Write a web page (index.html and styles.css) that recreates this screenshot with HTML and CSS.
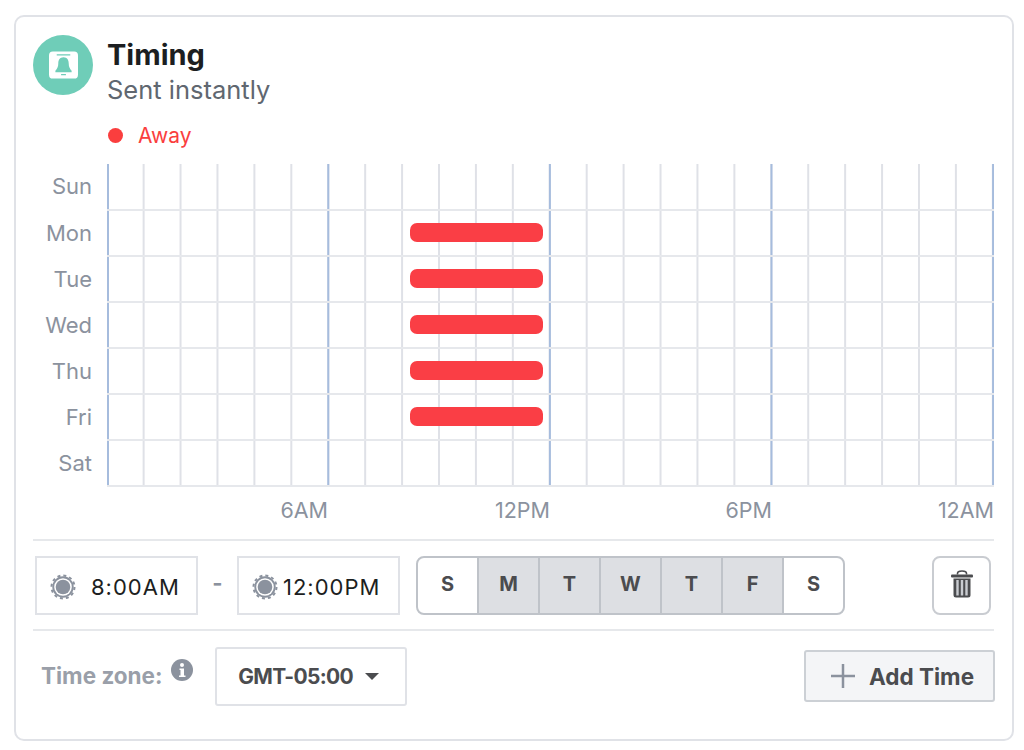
FILE: index.html
```html
<!DOCTYPE html>
<html lang="en">
<head>
<meta charset="utf-8">
<title>Timing</title>
<link rel="stylesheet" href="styles.css">
</head>
<body>
<section class="card">
  <header class="head">
    <div class="badge">
      <svg width="29" height="28" viewBox="0 0 30 28"><rect width="30" height="28" rx="4" fill="#fff"/><path d="M8 3.500h14M12.500 24h5" stroke="#6fcdb8" stroke-width="1.300"/><path d="M15 6c-3.800 0-5.400 3-5.400 6.500 0 3.500-1.100 5.200-3 7.500v1.500h16.800V20c-1.900-2.300-3-4-3-7.500C20.400 9 18.800 6 15 6z" fill="#6fcdb8"/></svg>
    </div>
    <div>
      <h1 class="title">Timing</h1>
      <p class="sub">Sent instantly</p>
    </div>
  </header>
  <div class="legend"><span class="dot"></span>Away</div>

  <div class="chart">
    <div class="row"><span class="day">Sun</span><div class="track"></div></div>
    <div class="row"><span class="day">Mon</span><div class="track"><span class="bar"></span></div></div>
    <div class="row"><span class="day">Tue</span><div class="track"><span class="bar"></span></div></div>
    <div class="row"><span class="day">Wed</span><div class="track"><span class="bar"></span></div></div>
    <div class="row"><span class="day">Thu</span><div class="track"><span class="bar"></span></div></div>
    <div class="row"><span class="day">Fri</span><div class="track"><span class="bar"></span></div></div>
    <div class="row"><span class="day">Sat</span><div class="track"></div></div>
    <div class="axis"><span>6AM</span><span>12PM</span><span>6PM</span><span>12AM</span></div>
  </div>

  <div class="controls">
    <div class="time">
      <svg class="sun" width="26" height="26" viewBox="0 0 26 26"><circle cx="13" cy="13" r="11.500" fill="none" stroke="#8b929e" stroke-width="2" stroke-dasharray="3 3.021"/><circle cx="13" cy="13" r="10.700" fill="#8b929e"/><circle cx="13" cy="13" r="8.800" fill="#fff"/><circle cx="13" cy="13" r="7.300" fill="#8b929e"/></svg>
      <span class="clock wide">8:00AM</span>
    </div>
    <span class="dash">-</span>
    <div class="time">
      <svg class="sun" width="26" height="26" viewBox="0 0 26 26"><circle cx="13" cy="13" r="11.500" fill="none" stroke="#8b929e" stroke-width="2" stroke-dasharray="3 3.021"/><circle cx="13" cy="13" r="10.700" fill="#8b929e"/><circle cx="13" cy="13" r="8.800" fill="#fff"/><circle cx="13" cy="13" r="7.300" fill="#8b929e"/></svg>
      <span class="clock">12:00PM</span>
    </div>
    <div class="week">
      <span class="wd">S</span><span class="wd on">M</span><span class="wd on">T</span><span class="wd on">W</span><span class="wd on">T</span><span class="wd on">F</span><span class="wd">S</span>
    </div>
    <button class="trash" type="button" aria-label="Delete">
      <svg width="22" height="28" viewBox="0 0 22 28"><path d="M6.500 4.500V3.500C6.500 1.800 8 1 11 1s4.500.8 4.500 2.500v1" fill="none" stroke="#4b4c4f" stroke-width="1.600"/><rect y="4.500" width="22" height="3" rx="1" fill="#4b4c4f"/><path d="M2.500 8.500h17V25a2.500 2.500 0 0 1-2.500 2.500H5A2.500 2.500 0 0 1 2.500 25z" fill="#4b4c4f"/><path d="M6.500 10v15.500M11 10v15.500M15.500 10v15.500" stroke="#c9ccd1" stroke-width="2.400"/></svg>
    </button>
  </div>

  <div class="footer">
    <span class="tz-label">Time zone:</span>
    <svg class="info" width="22" height="22" viewBox="0 0 22 22"><circle cx="11" cy="11" r="11" fill="#8b929e"/><circle cx="11" cy="6" r="2" fill="#fff"/><path d="M8.500 9.500H13v7h1.500v1.500h-6.500v-1.500H9.500v-5.500H8.500z" fill="#fff"/></svg>
    <button class="select" type="button">GMT-05:00<span class="caret"></span></button>
    <button class="add" type="button">
      <svg width="26" height="26" viewBox="0 0 26 26"><path d="M13 1v24M1 13h24" stroke="#8b929e" stroke-width="2.500"/></svg>
      Add Time
    </button>
  </div>
</section>
</body>
</html>
```
FILE: styles.css
```css
* { box-sizing: border-box; }
html, body { margin: 0; background: #fff; }
body {
  width: 1024px;
  height: 750px;
  padding: 15px 10px 9px 14px;
  font-family: "Inter", "Liberation Sans", sans-serif;
  overflow: hidden;
}
.card {
  height: 726px;
  border: 2px solid #e0e2e7;
  border-radius: 10px;
  padding: 18px 18px 0 17px;
}
.head { display: flex; gap: 14px; }
.badge {
  width: 60px;
  height: 60px;
  border-radius: 50%;
  background: #6fcdb8;
  display: flex;
  align-items: center;
  justify-content: center;
}
.title {
  margin: 2px 0 0;
  font-size: 29px;
  line-height: 36px;
  font-weight: 700;
  color: #1c1e21;
}
.sub {
  margin: 0;
  font-size: 25.500px;
  line-height: 34px;
  color: #606770;
}
.legend {
  display: flex;
  align-items: center;
  margin: 13px 0 0 75px;
  height: 30px;
  font-size: 21px;
  color: #fa3e3e;
}
.dot {
  width: 15px;
  height: 15px;
  border-radius: 50%;
  background: #fa3e3e;
  margin-right: 15px;
}
.chart { margin-top: 14px; }
.row { display: flex; height: 46px; }
.row:first-child { height: 47px; }
.day {
  width: 59px;
  margin-right: 15px;
  text-align: right;
  font-size: 22px;
  line-height: 44px;
  color: #8b929e;
}
.track {
  width: 887px;
  padding: 12px 0 0 303px;
  border-bottom: 2px solid #e6e8ec;
  background-image:
    linear-gradient(#a6bcdd, #a6bcdd),
    linear-gradient(90deg, #a6bcdd 2px, transparent 2px),
    linear-gradient(90deg, #dfe1e7 2px, transparent 2px);
  background-size: 2px 100%, 221.600px 100%, 36.930px 100%;
  background-position: 0 0, -1.300px 0, -1.300px 0;
  background-repeat: no-repeat, repeat-x, repeat-x;
}
.bar {
  display: block;
  width: 133px;
  height: 19px;
  border-radius: 7px;
  background: #fa3e45;
}
.axis {
  display: grid;
  grid-template-columns: 295px repeat(3, 222px);
  margin-top: 9px;
  height: 33px;
  font-size: 21.500px;
  line-height: 28px;
  color: #8b929e;
  text-align: right;
}
.controls {
  display: flex;
  align-items: center;
  margin-top: 10px;
  padding: 15px 0 14px 2px;
  border-top: 2px solid #e6e8eb;
  border-bottom: 2px solid #e6e8eb;
  width: 961px;
}
.time {
  width: 163px;
  height: 59px;
  border: 2px solid #e0e2e7;
  display: flex;
  align-items: center;
  padding: 2px 0 0 13px;
  font-size: 22px;
  color: #1c1e21;
}
.clock { margin-left: 5px; letter-spacing: 1px; }
.clock.wide { margin-left: 15px; }
.sun { flex: none; margin-top: 1px; }
.dash { width: 39px; text-align: center; font-size: 22px; color: #8b929e; font-weight: 700; padding-bottom: 6px; }
.week {
  display: flex;
  width: 429px;
  height: 59px;
  margin-left: 16px;
  border: 2px solid #bfc3c9;
  border-radius: 8px;
  overflow: hidden;
}
.wd {
  flex: 1;
  display: flex;
  align-items: center;
  justify-content: center;
  font-size: 20px;
  font-weight: 700;
  color: #4b4c4f;
  padding-bottom: 4px;
  border-left: 2px solid #bfc3c9;
}
.wd:first-child { border-left: 0; }
.wd.on { background: #dddfe3; }
.trash {
  width: 59px;
  height: 59px;
  margin-left: 87px;
  padding: 0 0 3px;
  border: 2px solid #c9ccd1;
  border-radius: 8px;
  background: #fff;
  display: flex;
  align-items: center;
  justify-content: center;
}
.footer { display: flex; align-items: flex-start; padding: 16px 0 0 8px; }
.tz-label {
  margin-top: 15px;
  font-size: 22.500px;
  line-height: 28px;
  font-weight: 700;
  color: #9a9fa9;
}
.info { margin: 12px 0 0 8px; }
.select {
  width: 192px;
  height: 59px;
  margin-left: 22px;
  padding: 0 4px 0 0;
  border: 2px solid #e0e2e7;
  border-radius: 3px;
  background: #fff;
  font: 700 21px "Inter", "Liberation Sans", sans-serif;
  letter-spacing: -0.700px;
  color: #4b4c4f;
  display: flex;
  align-items: center;
  justify-content: center;
}
.caret {
  width: 0;
  height: 0;
  margin-left: 12px;
  border: 7px solid transparent;
  border-top-color: #4b4c4f;
  border-bottom: 0;
}
.add {
  width: 191px;
  height: 52px;
  margin: 3px -1px 0 auto;
  padding: 0 0 0 24px;
  border: 2px solid #ccd0d5;
  border-radius: 3px;
  background: #f4f5f7;
  font: 700 22.500px "Inter", "Liberation Sans", sans-serif;
  color: #4b4c4f;
  display: flex;
  align-items: center;
  gap: 13px;
}
```
